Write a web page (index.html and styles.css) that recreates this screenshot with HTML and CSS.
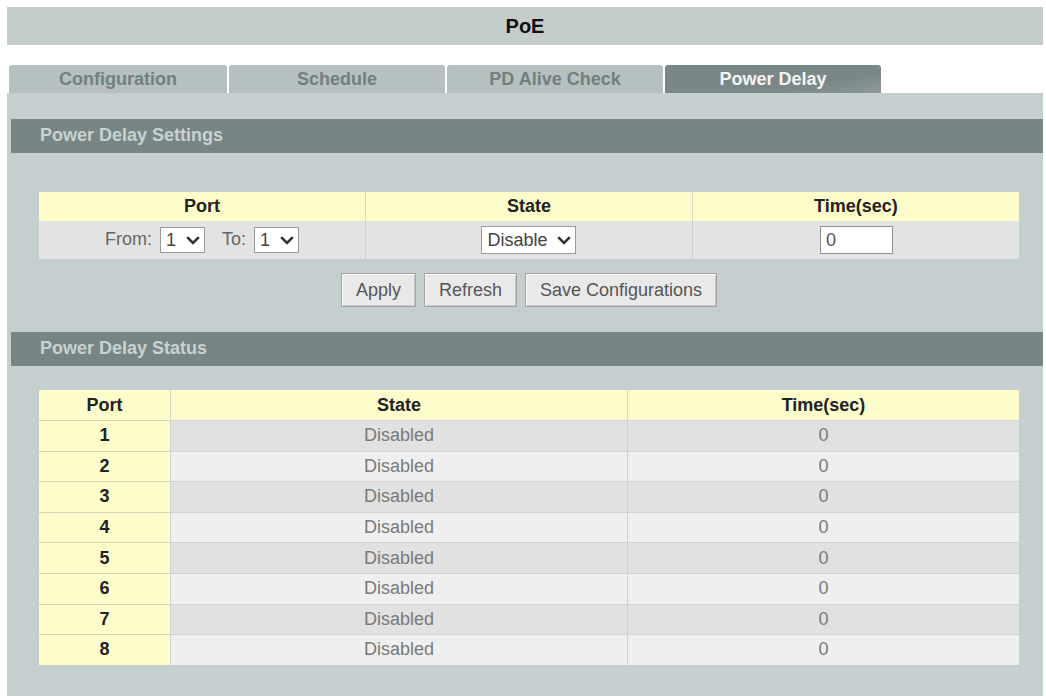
FILE: index.html
```html
<!DOCTYPE html>
<html lang="en">

<head>
    <meta charset="UTF-8">
    <meta name="viewport" content="width=device-width, initial-scale=1.0">
    <title>PoE - Power Delay</title>
    <link rel="stylesheet" href="styles.css">
</head>

<body>
    <div class="page">
        <div class="title-bar">PoE</div>

        <div class="tabs">
            <div class="tab">Configuration</div>
            <div class="tab">Schedule</div>
            <div class="tab">PD Alive Check</div>
            <div class="tab active">Power Delay</div>
        </div>

        <div class="panel">
            <div class="section-header">Power Delay Settings</div>

            <table class="settings">
                <tr>
                    <th>Port</th>
                    <th>State</th>
                    <th>Time(sec)</th>
                </tr>
                <tr>
                    <td>
                        From:
                        <span class="select port-select">
                            <select><option>1</option><option>2</option><option>3</option><option>4</option>
                                <option>5</option><option>6</option><option>7</option><option>8</option></select>
                            <svg viewBox="0 0 12 8"><path d="M1 1.5 L6 6.5 L11 1.5"/></svg>
                        </span>
                        <span class="to-label">To:</span>
                        <span class="select port-select">
                            <select><option>1</option><option>2</option><option>3</option><option>4</option>
                                <option>5</option><option>6</option><option>7</option><option>8</option></select>
                            <svg viewBox="0 0 12 8"><path d="M1 1.5 L6 6.5 L11 1.5"/></svg>
                        </span>
                    </td>
                    <td>
                        <span class="select state-select">
                            <select><option>Disable</option><option>Enable</option></select>
                            <svg viewBox="0 0 12 8"><path d="M1 1.5 L6 6.5 L11 1.5"/></svg>
                        </span>
                    </td>
                    <td><input class="time-input" type="text" value="0"></td>
                </tr>
            </table>

            <div class="buttons">
                <button>Apply</button>
                <button>Refresh</button>
                <button>Save Configurations</button>
            </div>

            <div class="section-header status-header">Power Delay Status</div>

            <table class="status">
                <thead>
                    <tr>
                        <th class="col-port">Port</th>
                        <th class="col-state">State</th>
                        <th>Time(sec)</th>
                    </tr>
                </thead>
                <tbody id="status-rows"></tbody>
            </table>
        </div>
    </div>

    <script>
        const ports = [1, 2, 3, 4, 5, 6, 7, 8];
        const rows = document.getElementById('status-rows');

        ports.forEach(port => {
            const tr = document.createElement('tr');
            tr.innerHTML = `<td class="port">${port}</td><td>Disabled</td><td>0</td>`;
            rows.appendChild(tr);
        });
    </script>
</body>

</html>
```

FILE: styles.css
```css
:root {
    --title-bg: #c4cccc;
    --tab-bg: #b5c0c0;
    --tab-text: #71807f;
    --tab-active: #798887;
    --panel-bg: #c6cfcf;
    --header-bg: #778685;
    --header-text: #c9d1d1;
    --yellow: #fdfdcb;
    --row-odd: #e1e1e1;
    --row-even: #efefef;
    --cell-text: #7a7a7a;
}

body {
    font-family: "Liberation Sans", Arial, Helvetica, sans-serif;
    font-size: 18px;
    background-color: #ffffff;
    margin: 0;
    padding: 0;
}

.page {
    padding: 7px 3px 0 7px;
}

.title-bar {
    background-color: var(--title-bg);
    height: 38px;
    line-height: 38px;
    text-align: center;
    font-size: 20px;
    font-weight: bold;
    color: #111;
}

.tabs {
    display: flex;
    gap: 2px;
    margin-top: 20px;
    padding-left: 2px;
}

.tab {
    width: 216px;
    height: 28px;
    line-height: 28px;
    text-align: center;
    font-weight: bold;
    color: var(--tab-text);
    background-color: var(--tab-bg);
    border-radius: 3px 3px 0 0;
}

.tab:first-child {
    width: 218px;
}

.tab.active {
    color: #f5f5f5;
    background: linear-gradient(170deg, var(--tab-active) 70%, #8d9a99 100%);
}

.panel {
    background-color: var(--panel-bg);
    padding: 26px 0 31px 4px;
}

.section-header {
    background-color: var(--header-bg);
    color: var(--header-text);
    font-weight: bold;
    height: 34px;
    line-height: 32px;
    padding-left: 29px;
}

.status-header {
    margin-top: 25px;
}

table {
    border-collapse: collapse;
    width: 980px;
    margin-left: 28px;
}

th {
    background-color: var(--yellow);
    color: #222;
    font-weight: bold;
    text-align: center;
    padding: 0;
}

td {
    text-align: center;
    padding: 0;
}

/* settings table */
.settings {
    margin-top: 39px;
    table-layout: fixed;
}

.settings th {
    height: 29px;
    border-left: 1px solid #d8d8c4;
}

.settings td {
    height: 38px;
    background-color: #e3e3e3;
    color: #666;
    border-left: 1px solid #cfcfcf;
}

.settings th:first-child,
.settings td:first-child {
    border-left: none;
}

.select {
    position: relative;
    display: inline-block;
    vertical-align: middle;
}

.select select {
    appearance: none;
    -webkit-appearance: none;
    font-family: inherit;
    font-size: 18px;
    color: #444;
    background-color: #fff;
    border: 1px solid #9a9a9a;
    border-radius: 0;
    padding: 0 0 0 5px;
    height: 26px;
    margin: 0;
}

.select svg {
    position: absolute;
    right: 5px;
    top: 8px;
    width: 14px;
    height: 10px;
    pointer-events: none;
}

.select svg path {
    fill: none;
    stroke: #333;
    stroke-width: 2.2;
}

.port-select select {
    width: 45px;
    margin-left: 3px;
}

.to-label {
    margin-left: 12px;
}

.state-select select {
    width: 95px;
    height: 28px;
}

.state-select svg {
    top: 9px;
}

.time-input {
    font-family: inherit;
    font-size: 18px;
    color: #555;
    width: 73px;
    height: 28px;
    box-sizing: border-box;
    border: 1px solid #8f8f8f;
    padding: 0 5px;
    margin: 0 0 0 1px;
    vertical-align: middle;
}

/* buttons */
.buttons {
    display: flex;
    justify-content: center;
    gap: 8px;
    width: 980px;
    margin: 14px 0 0 28px;
}

button {
    font-family: inherit;
    font-size: 18px;
    color: #555;
    height: 34px;
    padding: 0 14px;
    background-color: #e9e9e9;
    border: 1px solid #a3a3a3;
    box-shadow: inset 1px 1px 0 #f8f8f8, inset -1px -1px 0 #c9c9c9;
    cursor: pointer;
}

/* status table */
.status {
    margin-top: 24px;
}

.status th {
    height: 30px;
}

.col-port {
    width: 131px;
}

.col-state {
    width: 456px;
    border-left: 1px solid #d8d8c4;
    border-right: 1px solid #d8d8c4;
}

.status td {
    height: 29.6px;
    color: var(--cell-text);
    border-top: 1px solid #d3d3d3;
}

.status td:nth-child(2) {
    border-left: 1px solid #d0d0d0;
    border-right: 1px solid #d0d0d0;
}

.status tbody tr:nth-child(odd) td {
    background-color: var(--row-odd);
}

.status tbody tr:nth-child(even) td {
    background-color: var(--row-even);
}

.status tbody tr td.port {
    background-color: var(--yellow);
    color: #222;
    font-weight: bold;
    border-top: 1px solid #d6d6b4;
}
```
